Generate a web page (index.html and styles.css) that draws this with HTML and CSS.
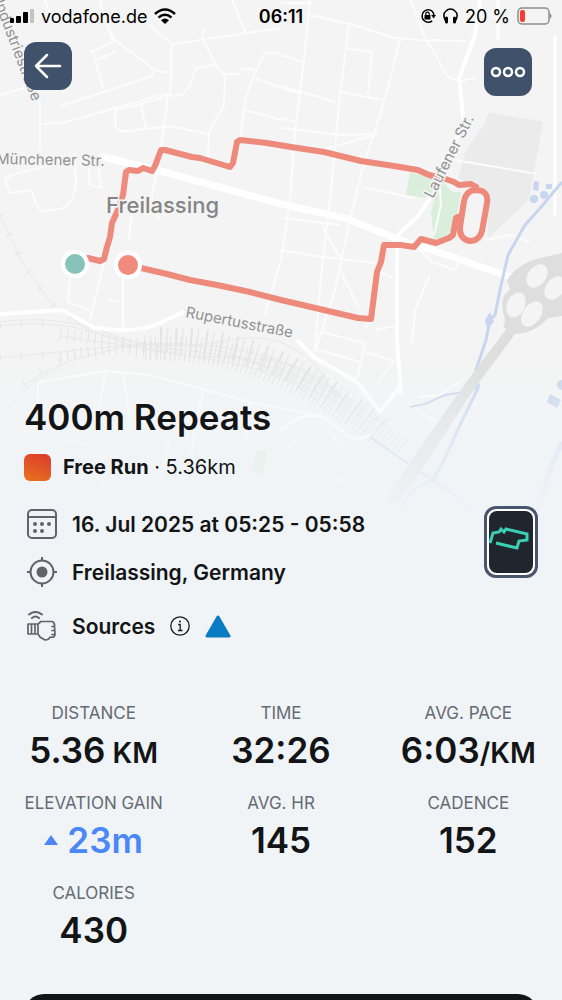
FILE: index.html
```html
<!DOCTYPE html>
<html lang="en">
<head>
  <meta charset="UTF-8">
  <meta name="viewport" content="width=device-width, initial-scale=1.0">
  <title>400m Repeats</title>
  <link rel="stylesheet" href="styles.css">
</head>
<body>

  <!-- Map behind the header -->
  <svg class="map" viewBox="0 0 562 520" aria-hidden="true">
    <defs>
      <linearGradient id="fade" x1="0" y1="0" x2="0" y2="1">
        <stop offset="0" stop-color="#f0f4f7" stop-opacity="0"/>
        <stop offset="0.4" stop-color="#f0f4f7" stop-opacity="0.5"/>
        <stop offset="1" stop-color="#f0f4f7"/>
      </linearGradient>
    </defs>
    <rect width="562" height="520" fill="#f4f4f4"/>

    <!-- Areas -->
    <path fill="#ebebeb" d="M489 112L543 122L529 200L488 238L487 195L458 178L466 150L484 125Z"/>
    <path fill="#d9eedb" d="M410 173L440 178L452 192L461 192L453 236L434 240L431 212L437 190L424 198L406 195Z"/>
    <path fill="#d9eedb" d="M257 450L267 451L263 476L251 472Z"/>

    <!-- Rails -->
    <g class="rail">
      <path d="M0 215L22 262L50 302L88 330Q130 345 200 352T330 392T440 465"/>
      <path d="M0 326Q60 318 110 338T240 358T350 410"/>
      <path d="M0 358Q60 352 130 345T260 365T370 422"/>
      <path d="M20 388Q60 358 120 348T240 350T345 400"/>
      <path d="M0 322Q60 314 110 334T230 340T335 395M60 336Q160 350 230 363T330 415"/>
      <path d="M0 420Q20 385 60 368"/>
    </g>
    <g class="ties">
      <path class="sparse" d="M0 215L22 262L50 302L88 330M0 326Q40 320 62 324M0 358Q40 354 62 351M24 384Q40 368 60 362"/>
      <path class="narrow" d="M60 334L110 340L160 348M60 356L120 348L165 354"/>
      <path class="wide" d="M145 348Q220 345 285 376T400 450"/>
      <path class="wide wide-alt" d="M160 340Q240 340 300 375T380 430"/>
    </g>

    <!-- Small streets -->
    <g class="street">
      <path d="M40 109V128M42 124L66 122L168 93L165 120L160 155L152 195M0 95L24 88M100 0L105 20L115 40L155 70L168 73M144 20L172 44L170 95"/>
      <path d="M45 0L52 20M90 52L113 42L108 28M92 50L103 88M97 60L115 52M155 70L150 77L60 106M165 96L182 95L190 85L196 68L216 65L202 38L204 28"/>
      <path d="M172 44L281 28M216 65L225 75L224 105L209 132L208 160M223 74L238 74L242 68L256 70L246 96L240 140M245 110L281 120M256 79L300 94M256 70L266 52L281 54"/>
      <path d="M115 110L141 104L165 97M115 110L116 128Q118 132 128 131L170 126L208 134M141 104L146 128M232 0L245 32M281 3L312 3M310 0L304 60L295 130L290 200L281 260L265 315"/>
      <path d="M306 14L350 24L395 38L420 40L466 41M349 24L340 95L330 200L322 265L315 350M345 48L372 52L368 94M340 92L384 100M400 40L386 95L375 130L362 170L350 220L335 290L325 320L315 352"/>
      <path d="M411 0L425 38L440 62Q445 80 460 81L475 78M281 55L304 62M281 86L336 102M281 118L296 122M281 128L340 135L378 134M362 187L415 198M439 177L441 205L434 235"/>
      <path d="M281 218L340 225M281 250L316 256L376 263M322 225L326 234L340 257M322 150L375 135M455 160L538 174M486 240L510 235L530 242"/>
      <path d="M5 180Q8 174 40 168L60 160M5 180L10 193L32 190Q36 208 42 211L65 208Q76 198 76 180L75 150M40 100V150M88 160L90 185L101 188L98 165M152 195L151 212L160 218"/>
      <path d="M104 262L90 320M123 268V330M71 270L68 302L90 310M132 208L129 240M108 300L119 302M322 332L365 343L358 375L353 382M319 350L360 362M365 352L394 361L378 382M376 270L394 278"/>
      <path d="M420 250L432 262L455 270L460 258M430 275L415 310L412 345M340 270L360 310M374 330L396 326M365 328L373 318"/>
      <path d="M38 382V430M39 382L105 371L150 375L250 402L290 410L320 416M106 372L98 410M123 373L130 420M204 388L194 430L192 460M250 402L246 440M60 440Q100 440 103 465V510M170 438L158 490"/>
      <path d="M325 425Q345 450 355 480V520M281 455L300 435M295 465L355 485M417 397L440 395L465 378M407 402L440 425"/>
    </g>

    <!-- Main roads -->
    <path class="road" d="M100 156L160 171L230 190L281 204L345 218L400 240L450 256L510 277" stroke-width="7"/>
    <path class="road" d="M480 0L475 35L459 78L464 125L444 160L436 190L418 216L397 236V340L401 395" stroke-width="4"/>
    <path class="road" d="M0 314L62 310L95 328Q135 333 155 325L184 312M297 340L315 358L340 372L358 383L380 412L401 385" stroke-width="4"/>
    <path class="road" d="M281 430Q310 405 330 422L350 437Q362 441 371 434" stroke-width="3"/>
    <path class="road" d="M555 35V215M498 0V40" stroke="#f8f8f8" stroke-width="3"/>

    <!-- Water -->
    <g class="water">
      <path stroke-width="3" d="M562 182L542 206L525 225L508 255L500 290L495 315L490 320L486 340L476 370L478 388L460 425L444 460L433 480"/>
      <path stroke-width="2" d="M410 407L425 404L445 395L470 391L480 385M370 437L410 465L440 485L475 510M433 480L412 490L400 510"/>
      <path stroke-width="5" opacity="0.7" d="M562 442L552 465L540 500"/>
    </g>
    <g fill="#c7d5ee">
      <circle cx="534" cy="199" r="4"/>
      <circle cx="544" cy="195" r="4"/>
      <path d="M534 181L539 182L538 191L533 190ZM546 184H552V189H546ZM550 394L561 400L557 408L547 402ZM490 312L494 322L487 329L485 320Z"/>
      <circle cx="562" cy="385" r="5"/>
    </g>

    <!-- Motorway and junction -->
    <path class="motorway" d="M507 328L515 334L475 388L421 470L396 505H384L408 465L462 388Z"/>
    <path class="motorway" d="M507 280Q520 261 545 257L562 253V316L548 318Q535 333 515 334L503 327Q507 321 503 312Q500 295 510 290Z"/>
    <g fill="#f4f4f4">
      <ellipse cx="537" cy="276" rx="9" ry="13" transform="rotate(38 537 276)"/>
      <ellipse cx="555" cy="288" rx="9" ry="13" transform="rotate(38 555 288)"/>
      <ellipse cx="516" cy="305" rx="9" ry="13" transform="rotate(24 516 305)"/>
      <ellipse cx="532" cy="314" rx="9" ry="14" transform="rotate(34 532 314)"/>
    </g>

    <!-- Recorded route -->
    <path class="route" d="M75 264L88 258L100 261L104 259L107 247L110 237L112 223L117 212L123 195L126 172L129 170L138 171L143 168L152 171L155 166L158 158L161 150L165 150L192 157L200 158L230 167L233 163L237 142L240 140L267 143L291 147L324 152L361 161L394 166L418 170L429 175L443 178L454 182L459 185L471 184L478 188"/>
    <path class="route" d="M475 190Q489 190 487 203L482 231Q479 241 470 241Q459 239 460 227L464 201Q466 191 475 190Z"/>
    <path class="route" d="M460 216L456 218L453 235L449 238L436 243L421 239L414 247L401 245L384 245L381 262L377 272L371 319L358 318L281 300L250 292L217 285L190 280L167 274L128 265"/>
    <g stroke="#fff" stroke-width="4">
      <circle cx="75" cy="264" r="12" fill="#87c3bb"/>
      <circle cx="128" cy="265" r="12" fill="#ef8a7d"/>
    </g>

    <!-- Place names -->
    <g class="names">
      <text class="town" x="106" y="213">Freilassing</text>
      <text x="-4" y="164" transform="rotate(1 -4 164)">Münchener Str.</text>
      <text x="185" y="317" transform="rotate(11 185 317)">Rupertusstraße</text>
      <text x="433" y="199" transform="rotate(-63 433 199)">Laufener Str.</text>
      <text x="-6" y="2" transform="rotate(69 -6 2)">Industriestraße</text>
    </g>

    <rect y="360" width="562" height="160" fill="url(#fade)"/>
  </svg>

  <div class="page">
    <div class="status-bar">
      <div class="status-left">
        <svg width="24" height="16" viewBox="0 0 24 16">
          <rect y="10" width="4" height="5" rx="1"/>
          <rect x="6" y="8" width="5" height="7" rx="1"/>
          <rect x="13" y="4" width="5" height="11" rx="1"/>
          <rect x="20" y="1" width="4" height="14" rx="1" fill="#c4c4c4"/>
        </svg>
        <span>vodafone.de</span>
        <svg width="22" height="16" viewBox="0 0 22 16" fill="none" stroke="#000" stroke-width="2.5">
          <path d="M1 6Q11 -3 21 6M4.500 9.500Q11 4 17.500 9.500"/>
          <path d="M11 16L7 12.200Q11 9 15 12.200Z" fill="#000" stroke="none"/>
        </svg>
      </div>
      <div class="clock">06:11</div>
      <div class="status-right">
        <svg width="16" height="16" viewBox="0 0 16 16" fill="none" stroke="#000" stroke-width="1.500">
          <path d="M12.200 3.200A6.200 6.200 0 1 0 12.200 12.800M12.200 3.200Q13.800 5 13.800 7"/>
          <path d="M11.200 7H16L13.600 10.500Z" fill="#000" stroke="none"/>
          <rect x="4.500" y="7" width="6" height="4.500" rx="0.500" fill="#000" stroke="none"/>
          <path d="M5.800 7V5.800A1.700 1.700 0 0 1 9.200 5.800V7" stroke-width="1.200"/>
        </svg>
        <svg width="15" height="16" viewBox="0 0 15 16" fill="none" stroke="#000" stroke-width="1.500">
          <path d="M2.500 13Q-1 6 3 3A6.300 6.300 0 0 1 12 3Q16 6 12.500 13"/>
          <path d="M3.500 10V14M11.500 10V14" stroke-width="3" stroke-linecap="round"/>
        </svg>
        <span>20 %</span>
        <svg width="35" height="18" viewBox="0 0 35 18">
          <rect x="1" y="1" width="31" height="16" rx="4" fill="none" stroke="#8c8c8c" stroke-width="1.500"/>
          <rect x="3" y="3" width="5" height="12" rx="2" fill="#fb3b30"/>
          <path d="M33 6Q36 9 33 12Z" fill="#8c8c8c"/>
        </svg>
      </div>
    </div>

    <div class="toolbar">
      <button class="icon-btn" aria-label="Back">
        <svg width="28" height="28" viewBox="0 0 28 28" fill="none" stroke="#fff" stroke-width="2.500" stroke-linecap="round" stroke-linejoin="round">
          <path d="M26 14H2M13 3L2 14L13 25"/>
        </svg>
      </button>
      <button class="icon-btn icon-btn-more" aria-label="More">
        <svg width="36" height="12" viewBox="0 0 36 12" fill="none" stroke="#fff" stroke-width="2.500">
          <circle cx="6" cy="6" r="4"/>
          <circle cx="18" cy="6" r="4"/>
          <circle cx="30" cy="6" r="4"/>
        </svg>
      </button>
    </div>

    <div class="summary">
      <h1>400m Repeats</h1>
      <p class="activity"><span class="swatch"></span><span><b>Free Run</b> · 5.36km</span></p>
    </div>

    <div class="details">
      <ul class="facts">
        <li>
          <svg width="30" height="30" viewBox="0 0 30 30" fill="none" stroke="#5f646c" stroke-width="2">
            <rect x="1" y="1" width="28" height="28" rx="4"/>
            <path d="M1 8H29"/>
            <g fill="#5f646c" stroke="none">
              <circle cx="8" cy="15" r="2"/><circle cx="15" cy="15" r="2"/><circle cx="22" cy="15" r="2"/>
              <circle cx="8" cy="22" r="2"/><circle cx="15" cy="22" r="2"/>
            </g>
          </svg>
          <span>16. Jul 2025 at 05:25 - 05:58</span>
        </li>
        <li>
          <svg width="30" height="30" viewBox="0 0 30 30" fill="none" stroke="#5f646c" stroke-width="2">
            <circle cx="15" cy="15" r="11.500"/>
            <circle cx="15" cy="15" r="5.500" fill="#5f646c" stroke="none"/>
            <path d="M15 0V4M15 26V30M0 15H4M26 15H30"/>
          </svg>
          <span>Freilassing, Germany</span>
        </li>
        <li class="sources">
          <svg width="30" height="30" viewBox="0 0 30 30" fill="none" stroke="#5f646c" stroke-width="1.700" stroke-linejoin="round" stroke-linecap="round">
            <path d="M2 3.500Q8.500 -1.500 15 3.500M5 7Q8.500 4 12 7" stroke-width="2"/>
            <path d="M1 13H11V23H1ZM4.500 13V23M8 13V23M11 13L14 10.500H25Q28 11.500 27.500 15L28 24Q27 27 23 26Q22 29 18 29L13 26L11 23M27 15.500H25M27.500 19.500H25M27.500 23.500H25"/>
          </svg>
          <span>Sources</span>
          <button class="info-btn" aria-label="About sources">
            <svg width="20" height="20" viewBox="0 0 20 20" fill="none" stroke="#17181a" stroke-width="1.300">
              <circle cx="10" cy="10" r="9.200"/>
              <path d="M8.200 8.500H10.200V14.500M8 14.500H12.500"/>
              <circle cx="10" cy="5.500" r="1" fill="#17181a" stroke="none"/>
            </svg>
          </button>
          <svg width="26" height="23" viewBox="0 0 26 23">
            <path d="M13 2L24 21H2Z" fill="#0a7cc4" stroke="#0a7cc4" stroke-width="3" stroke-linejoin="round"/>
          </svg>
        </li>
      </ul>
      <button class="watch" aria-label="Show on watch">
        <svg viewBox="0 0 44 62" fill="none" stroke="#3bd0b4" stroke-width="3">
          <path d="M1 32L4 22L10 21L12 18L15 21L17 18L38 23V29L30 30L28 37L7 32"/>
        </svg>
      </button>
    </div>

    <dl class="stats">
      <div><dt>DISTANCE</dt><dd>5.36<small> KM</small></dd></div>
      <div><dt>TIME</dt><dd>32:26</dd></div>
      <div><dt>AVG. PACE</dt><dd>6:03<small>/KM</small></dd></div>
      <div>
        <dt>ELEVATION GAIN</dt>
        <dd class="gain"><svg width="14" height="10" viewBox="0 0 14 10"><path d="M7 0L14 10H0Z" fill="#4b87f7"/></svg>23m</dd>
      </div>
      <div><dt>AVG. HR</dt><dd>145</dd></div>
      <div><dt>CADENCE</dt><dd>152</dd></div>
      <div><dt>CALORIES</dt><dd>430</dd></div>
    </dl>

    <div class="next-card"></div>
  </div>

</body>
</html>
```

FILE: styles.css
```css
* {
  margin: 0;
  padding: 0;
  box-sizing: border-box;
}

body {
  display: grid;
  grid-template-columns: 100%;
  align-items: start;
  height: 100vh;
  overflow: hidden;
  font-family: Inter, "Liberation Sans", sans-serif;
  background: #f0f4f7;
  color: #131416;
}

svg {
  display: block;
  flex: none;
}

button {
  border: none;
  background: none;
  cursor: pointer;
}

/* Map and page share one grid cell */
.map,
.page {
  grid-area: 1 / 1;
}

.map {
  width: 100%;
}

.page {
  position: relative;
}

.street {
  fill: none;
  stroke: #fcfcfc;
  stroke-width: 2;
}

.road {
  fill: none;
  stroke: #fff;
}

.rail {
  fill: none;
  stroke: #e9e9e9;
  stroke-width: 1;
}

.ties {
  fill: none;
  stroke: #e4e4e4;
}

.sparse {
  stroke-width: 7;
  stroke-dasharray: 1 20;
}

.narrow {
  stroke-width: 12;
  stroke-dasharray: 1 6;
}

.wide {
  stroke-width: 26;
  stroke-dasharray: 1 4;
}

.wide-alt {
  stroke-dasharray: 2 5 1 7;
}

.motorway {
  fill: #dedede;
}

.water {
  fill: none;
  stroke: #c7d5ee;
}

.route {
  fill: none;
  stroke: #ee8a7c;
  stroke-width: 6;
  stroke-linejoin: round;
}

.names {
  font-size: 15px;
  fill: #929292;
  stroke: #f4f4f4;
  stroke-width: 3px;
  paint-order: stroke;
}

.town {
  font-size: 22px;
  font-weight: 500;
  fill: #858585;
}

/* Status bar */
.status-bar {
  display: grid;
  grid-template-columns: 1fr auto 1fr;
  align-items: center;
  height: 32px;
  padding: 0 10px;
  font-size: 18px;
  color: #000;
}

.status-left,
.status-right {
  display: flex;
  align-items: center;
  gap: 7px;
}

.status-right {
  justify-content: flex-end;
}

.clock {
  font-weight: 600;
}

/* Back and more buttons */
.toolbar {
  display: flex;
  justify-content: space-between;
  align-items: flex-start;
  padding: 10px 30px 0 24px;
}

.icon-btn {
  display: flex;
  justify-content: center;
  align-items: center;
  width: 48px;
  height: 48px;
  border-radius: 12px;
  background: #40516b;
}

.icon-btn-more {
  margin-top: 6px;
}

/* Title */
.summary {
  padding: 298px 24px 0;
}

h1 {
  font-size: 35px;
  line-height: 46px;
  font-weight: 600;
}

.activity {
  display: flex;
  align-items: center;
  gap: 12px;
  margin-top: 12px;
  font-size: 20px;
  line-height: 30px;
}

.swatch {
  width: 27px;
  height: 27px;
  border-radius: 6px;
  background: linear-gradient(20deg, #e8731f, #dc3a2c);
}

/* Date, place, sources */
.details {
  display: flex;
  justify-content: space-between;
  align-items: flex-start;
  padding: 18px 24px 0 27px;
}

.facts {
  list-style: none;
  font-size: 21px;
  font-weight: 600;
}

.facts li {
  display: flex;
  align-items: center;
  gap: 15px;
  height: 48px;
}

.facts .sources {
  height: 60px;
}

.info-btn {
  display: flex;
}

.watch {
  width: 54px;
  height: 72px;
  margin-top: 6px;
  padding: 2px;
  border: 3px solid #47556d;
  border-radius: 12px;
  background: #fff;
}

.watch svg {
  width: 100%;
  height: 100%;
  border-radius: 8px;
  background: #20262e;
}

/* Numbers */
.stats {
  display: grid;
  grid-template-columns: repeat(3, 1fr);
  row-gap: 16px;
  margin-top: 45px;
  text-align: center;
}

dt {
  font-size: 17px;
  line-height: 24px;
  color: #666b73;
}

dd {
  font-size: 35px;
  line-height: 50px;
  font-weight: 600;
}

dd small {
  font-size: 28px;
  line-height: 28px;
}

.gain {
  display: flex;
  justify-content: center;
  align-items: center;
  gap: 9px;
  color: #4b87f7;
}

/* Top edge of the card below the numbers */
.next-card {
  height: 120px;
  margin: 39px 24px 0;
  border-radius: 20px;
  background: #131416;
}
```
